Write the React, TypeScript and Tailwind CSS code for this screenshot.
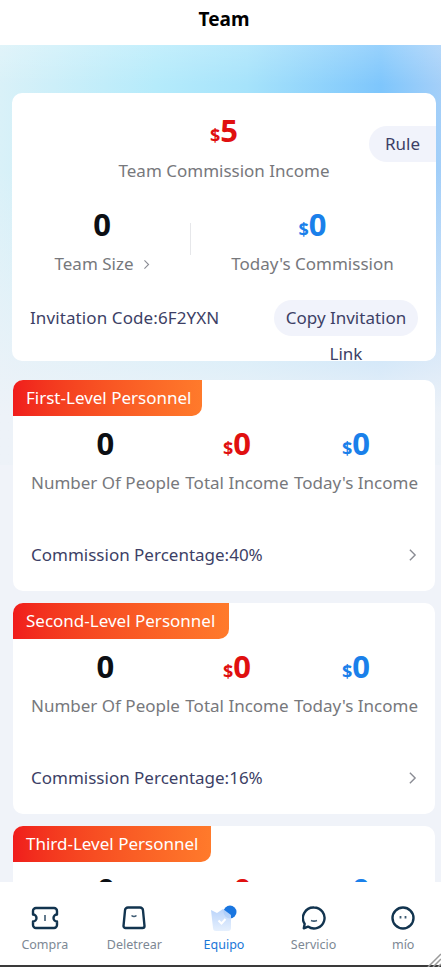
const font = { fontFamily: '"Noto Sans", sans-serif' };

function Money({ value, color }: { value: string; color: string }) {
  return (
    <div className={`flex h-9 items-baseline justify-center font-bold leading-[36px] ${color}`}>
      <span className="text-[18px]">$</span>
      <span className="text-[31px]">{value}</span>
    </div>
  );
}

function Chevron({ className }: { className: string }) {
  return (
    <svg viewBox="0 0 10 16" className={className} fill="none" stroke="currentColor" strokeWidth="1.6">
      <path d="M2 2l6 6-6 6" />
    </svg>
  );
}

function Stat({ label, children }: { label?: string; children: React.ReactNode }) {
  return (
    <div className="text-center">
      {children}
      {label && <div className="mt-[10px] text-[17px] leading-[24px] text-[#77787c]">{label}</div>}
    </div>
  );
}

function LevelCard({ title, percent, tagWidth, cut }: { title: string; percent: string; tagWidth: string; cut?: boolean }) {
  return (
    <section className="mx-[13px] mb-3 h-[211px] shrink-0 rounded-[10px] bg-white">
      <div className={`flex h-9 items-center rounded-tl-[10px] rounded-br-[10px] bg-gradient-to-r from-[#f01c1c] to-[#ff7a2b] pl-[13px] text-[17px] text-white ${tagWidth}`}>
        {title}
      </div>
      <div className="mt-[9px] flex justify-between whitespace-nowrap pl-[18px] pr-[17px]">
        {/* the third card runs under the tab bar, so only its numbers show */}
        <Stat label={cut ? undefined : "Number Of People"}>
          <div className={`${cut ? "w-[150px]" : ""} text-[31px] font-bold leading-[36px] text-[#0c0f14]`}>0</div>
        </Stat>
        <Stat label={cut ? undefined : "Total Income"}>
          <div className={cut ? "w-[103px]" : ""}><Money value="0" color="text-[#e01010]" /></div>
        </Stat>
        <Stat label={cut ? undefined : "Today's Income"}>
          <div className={cut ? "w-[124px]" : ""}><Money value="0" color="text-[#1a80ea]" /></div>
        </Stat>
      </div>
      {!cut && (
        <div className="mt-[48px] flex items-center justify-between pl-[18px] pr-[18px] text-[17px] leading-[24px] text-[#3d3f66]">
          <span>Commission Percentage:{percent}</span>
          <Chevron className="h-[14px] w-[9px] text-[#8a8c94]" />
        </div>
      )}
    </section>
  );
}

function NavItem({ label, active, children }: { label: string; active?: boolean; children: React.ReactNode }) {
  return (
    <div className="flex flex-col items-center">
      <div className="flex h-[30px] w-[34px] items-center justify-center">{children}</div>
      <span className={`mt-[4px] text-[12.500px] leading-[16px] ${active ? "text-[#1a76d8]" : "text-[#7d8894]"}`}>{label}</span>
    </div>
  );
}

export default function App() {
  return (
    <div className="relative h-[967px] w-[441px] overflow-hidden" style={font}>
      {/* the page is a little wider than the window and gets clipped on the right */}
      <div className="relative h-[967px] w-[448px] bg-[#f0f3f9]">
        <header className="flex h-[45px] items-center justify-center bg-white pb-[6px] text-[19px] font-bold text-black">Team</header>

        <main className="relative">
          {/* top background glow */}
          <div className="absolute inset-x-0 top-0 h-[420px] bg-[linear-gradient(90deg,#d9f1f8_0%,#b5ebfb_35%,#a6e3fb_55%,#7ec6fc_85%,#a8d0f8_100%)]" />
          <div className="absolute inset-x-0 top-0 h-[420px] bg-gradient-to-b from-transparent from-[30%] to-[#edf2f8] to-[88%]" />
          <div className="absolute inset-x-0 top-0 h-[40px] bg-gradient-to-b from-white/20 to-transparent" />

          <div className="relative flex flex-col pt-12">
            <section className="relative mx-3 mb-[19px] h-[268px] rounded-[10px] bg-white">
              <div className="pt-[19px]">
                <Money value="5" color="text-[#e01010]" />
                <div className="mt-[11px] text-center text-[17px] leading-[24px] text-[#77787c]">Team Commission Income</div>
              </div>
              <div className="absolute right-0 top-[33px] flex h-9 w-[67px] items-center rounded-l-[18px] bg-[#f1f3fb] pl-[16px] text-[17px] text-[#3d3f66]">Rule</div>

              <div className="mt-[23px] flex">
                <div className="w-[178px] pl-[2px] text-center">
                  <div className="text-[31px] font-bold leading-[36px] text-[#0c0f14]">0</div>
                  <div className="mt-[10px] flex items-center justify-center gap-[9px] text-[17px] leading-[24px] text-[#77787c]">
                    Team Size
                    <Chevron className="h-[11px] w-[7px] text-[#8a8c94]" />
                  </div>
                </div>
                <div className="mt-[17px] h-8 w-px bg-[#e6e7ea]" />
                <div className="flex-1 pr-[2px] text-center">
                  <Money value="0" color="text-[#1a80ea]" />
                  <div className="mt-[10px] text-[17px] leading-[24px] text-[#77787c]">Today's Commission</div>
                </div>
              </div>

              <div className="mt-[24px] flex items-start justify-between pl-[18px] pr-[18px] text-[17px] text-[#3d3f66]">
                <span className="leading-9 tracking-[0.1px]">Invitation Code:6F2YXN</span>
                <div className="h-9 w-[144px] rounded-[18px] bg-[#f1f3fb] text-center leading-9">Copy Invitation Link</div>
              </div>
            </section>

            <LevelCard title="First-Level Personnel" percent="40%" tagWidth="w-[189px]" />
            <LevelCard title="Second-Level Personnel" percent="16%" tagWidth="w-[216px]" />
            <LevelCard title="Third-Level Personnel" percent="8%" tagWidth="w-[198px]" cut />
          </div>
        </main>

        {/* tab bar */}
        <nav className="absolute inset-x-0 bottom-0 grid h-[85px] grid-cols-5 border-b-2 border-[#3a3a3a] bg-white pt-[21px]">
          <NavItem label="Compra">
            <svg viewBox="0 0 28 24" className="h-[24px] w-[28px]" fill="none" stroke="#12344f" strokeWidth="2.4" strokeLinejoin="round">
              <path d="M5 2h18a3 3 0 0 1 3 3v3.500a3.500 3.500 0 0 0 0 7V19a3 3 0 0 1-3 3H5a3 3 0 0 1-3-3v-3.500a3.500 3.500 0 0 0 0-7V5a3 3 0 0 1 3-3z" />
              <path d="M14 9v6" strokeWidth="1.600" stroke="#3d5a72" />
            </svg>
          </NavItem>
          <NavItem label="Deletrear">
            <svg viewBox="0 0 24 24" className="h-[24px] w-[24px]" fill="none" stroke="#12344f" strokeWidth="2.4">
              <path d="M6 1.500h12a3 3 0 0 1 3 3l1.500 15.500a2 2 0 0 1-2 2H3.500a2 2 0 0 1-2-2L3 4.500a3 3 0 0 1 3-3z" strokeLinejoin="round" />
              <path d="M9.500 9.500c1.500 1.200 3.500 1.200 5 0" strokeWidth="1.600" stroke="#3d5a72" />
            </svg>
          </NavItem>
          <NavItem label="Equipo" active>
            <svg viewBox="0 0 28 28" className="h-[28px] w-[28px]">
              <defs>
                <linearGradient id="teamBody" x1="0" y1="0" x2="0" y2="1">
                  <stop offset="0" stopColor="#b4d0fa" />
                  <stop offset="1" stopColor="#e4effd" />
                </linearGradient>
              </defs>
              <circle cx="20" cy="8" r="6.500" fill="#1a76e0" />
              <path d="M1 6l6 3 6-4 8 6v13a3 3 0 0 1-3 3H6a3 3 0 0 1-3-3z" fill="url(#teamBody)" fillOpacity="0.92" />
              <path d="M8.500 16.500l3 3 4-4.500" fill="none" stroke="#fff" strokeWidth="2" />
            </svg>
          </NavItem>
          <NavItem label="Servicio">
            <svg viewBox="0 0 24 24" className="h-[24px] w-[24px]" fill="none" stroke="#12344f" strokeWidth="2.4">
              <path d="M12 1.500a10.500 10.500 0 1 1-6 19.100L1.800 22.300l.9-4.500A10.500 10.500 0 0 1 12 1.500z" strokeLinejoin="round" />
              <path d="M9 14.500c2 .8 4 .8 6 0" strokeWidth="1.600" stroke="#3d5a72" />
            </svg>
          </NavItem>
          <NavItem label="mío">
            <svg viewBox="0 0 24 24" className="h-[24px] w-[24px]" fill="none" stroke="#12344f" strokeWidth="2.4">
              <circle cx="12" cy="12" r="10.500" />
              <path d="M9.500 10v2.500M14.500 10v2.500" strokeWidth="1.800" stroke="#3d5a72" />
            </svg>
          </NavItem>
        </nav>
      </div>

      {/* window resize grip */}
      <svg viewBox="0 0 14 14" className="absolute bottom-0 right-0 h-[14px] w-[14px]" stroke="#9a9a9a" strokeWidth="1.500">
        <path d="M1 14L14 1M6 14l8-8M11 14l3-3" />
      </svg>
    </div>
  );
}
